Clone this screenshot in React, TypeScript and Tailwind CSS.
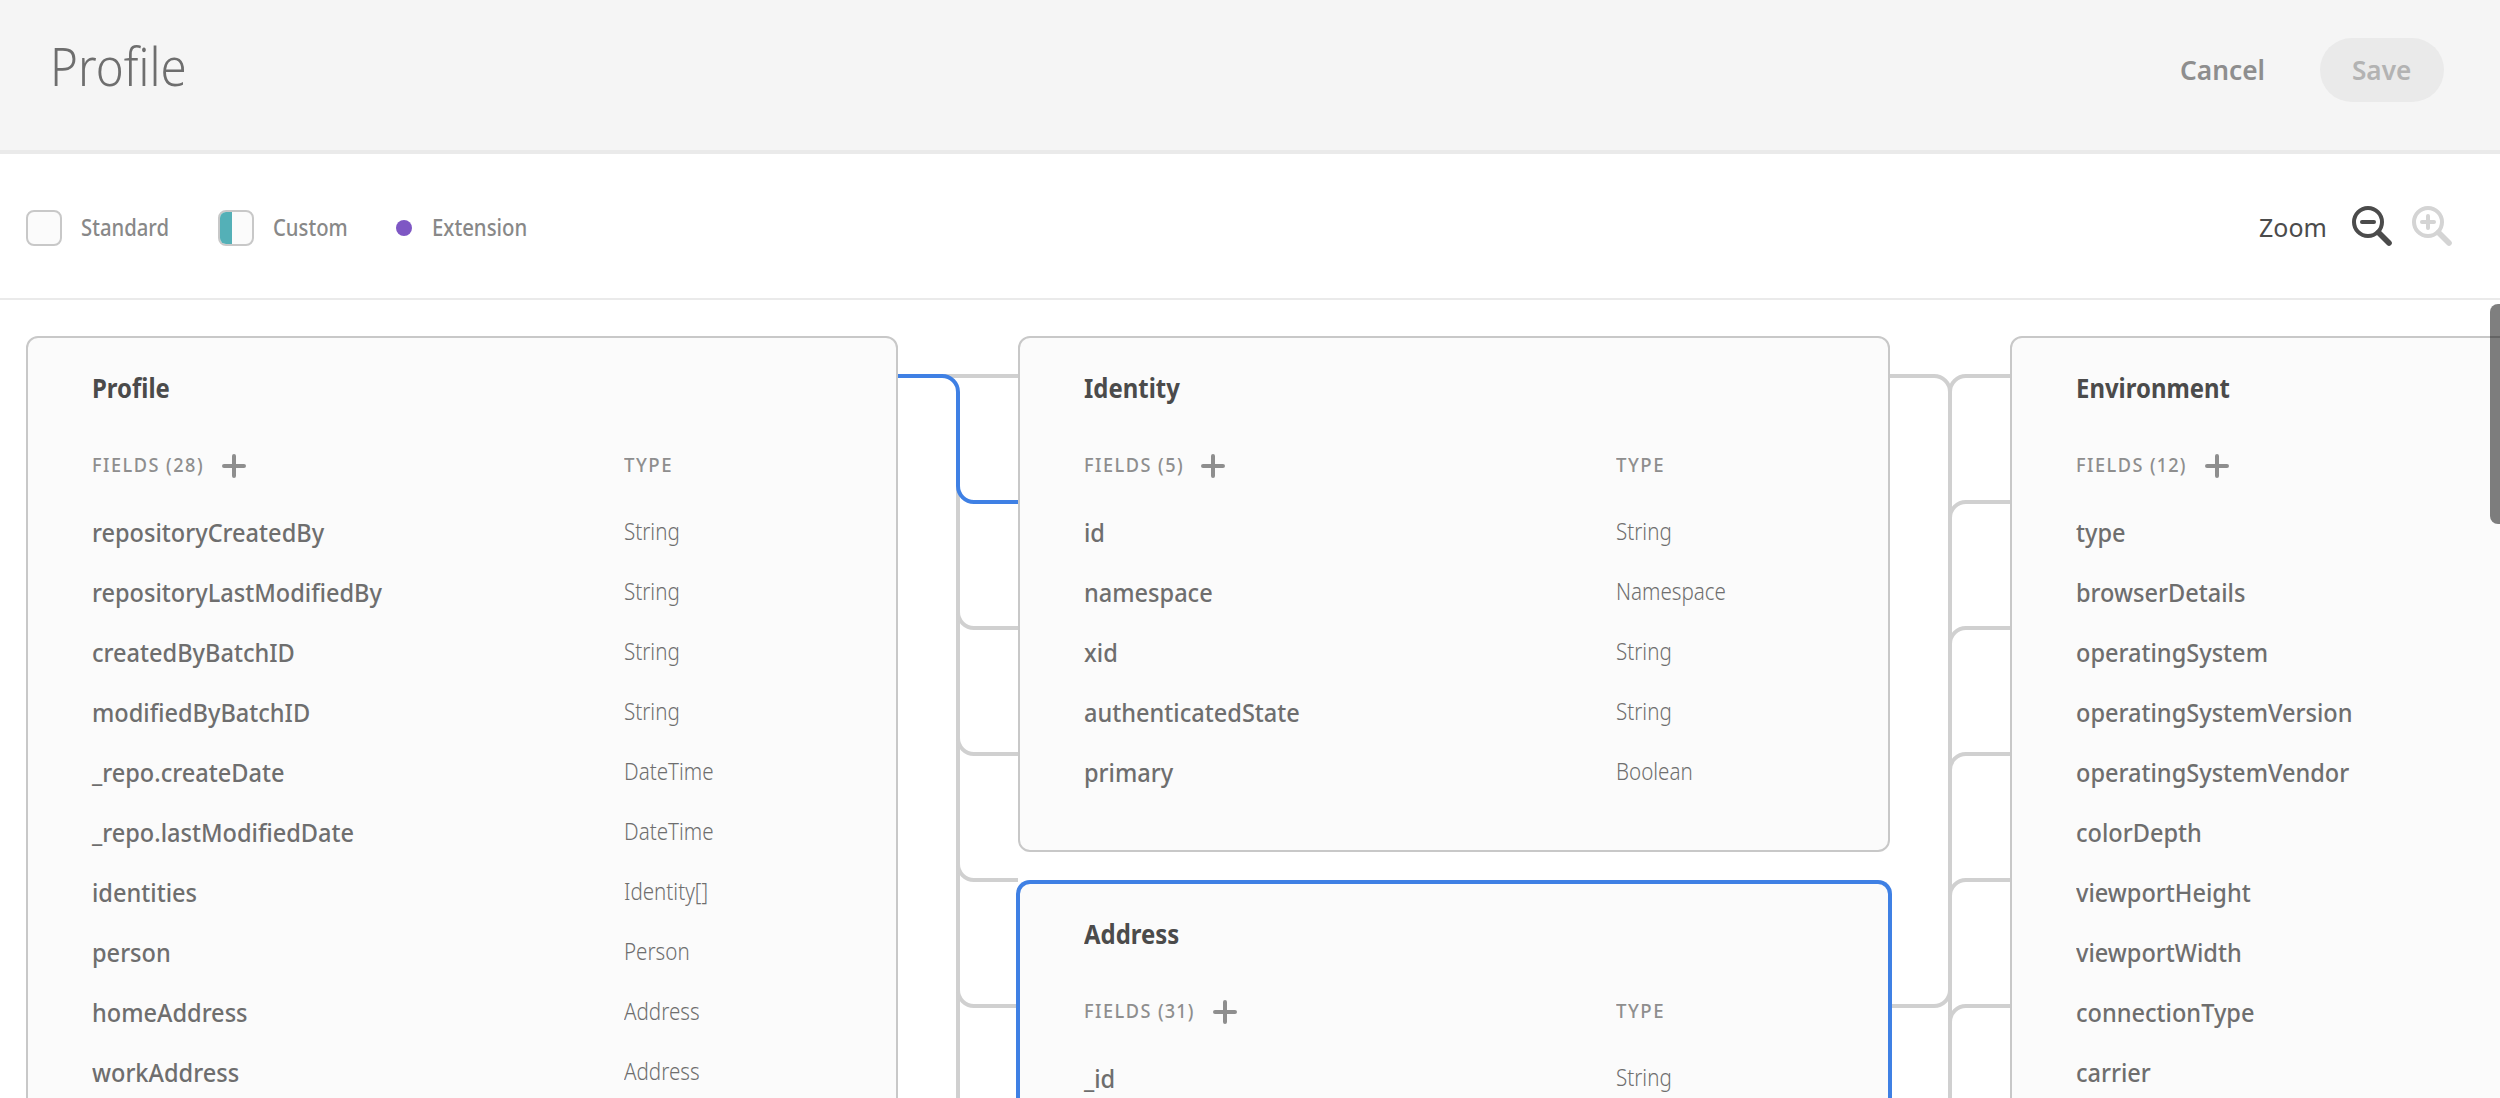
import type { ReactNode } from "react";

type Field = [name: string, type: string];

const profileFields: Field[] = [
  ["repositoryCreatedBy", "String"],
  ["repositoryLastModifiedBy", "String"],
  ["createdByBatchID", "String"],
  ["modifiedByBatchID", "String"],
  ["_repo.createDate", "DateTime"],
  ["_repo.lastModifiedDate", "DateTime"],
  ["identities", "Identity[]"],
  ["person", "Person"],
  ["homeAddress", "Address"],
  ["workAddress", "Address"],
];

const identityFields: Field[] = [
  ["id", "String"],
  ["namespace", "Namespace"],
  ["xid", "String"],
  ["authenticatedState", "String"],
  ["primary", "Boolean"],
];

const addressFields: Field[] = [["_id", "String"]];

const environmentFields: Field[] = [
  ["type", "String"],
  ["browserDetails", "BrowserDetails"],
  ["operatingSystem", "String"],
  ["operatingSystemVersion", "String"],
  ["operatingSystemVendor", "String"],
  ["colorDepth", "Integer"],
  ["viewportHeight", "Integer"],
  ["viewportWidth", "Integer"],
  ["connectionType", "String"],
  ["carrier", "String"],
];

function ZoomIcon({ plus = false, className }: { plus?: boolean; className: string }) {
  return (
    <svg viewBox="0 0 40 40" className={`size-10 ${className}`} fill="none" stroke="currentColor" strokeLinecap="round">
      <circle cx="16" cy="16" r="14" strokeWidth="4" />
      <path d="M26.5 26.5 37 37" strokeWidth="5.6" />
      <path d="M10 16h12" strokeWidth="4" />
      {plus && <path d="M16 10v12" strokeWidth="4" />}
    </svg>
  );
}

function SchemaCard({
  title,
  count,
  fields,
  selected = false,
  hideTypes = false,
  fill = false,
}: {
  title: string;
  count: number;
  fields: Field[];
  selected?: boolean;
  hideTypes?: boolean;
  fill?: boolean;
}) {
  // A "1" sits in a wide figure box, so counts holding one are set tighter.
  const countTracking = String(count).includes("1") ? "tracking-[1.2px]" : "tracking-[1.6px]";
  return (
    <section
      className={`w-[872px] shrink-0 border-2 bg-[#fbfbfb] px-16 pt-[30px] pb-12 ${
        selected ? "border-[#3f80e4] ring-2 ring-[#3f80e4]" : "border-[#c8c8c8]"
      } ${fill ? "h-[900px] rounded-t-xl" : "rounded-xl"}`}
    >
      <h2 className="origin-left scale-x-[0.92] text-[26px] leading-10 font-bold text-[#4b4b4b]">{title}</h2>
      <div className="mt-9 flex h-10 text-[19.6px] leading-[42px] font-medium text-[#8e8e8e]">
        <div className="flex w-[532px] items-center">
          <span className="mt-0.5 -mr-[10px] origin-left scale-x-[0.925] tracking-[1.6px] whitespace-nowrap">
            FIELDS <span className={countTracking}>({count})</span>
          </span>
          <svg viewBox="0 0 24 24" className="mt-1 ml-[19px] size-6" stroke="currentColor" strokeWidth="4" strokeLinecap="round">
            <path d="M12 2v20M2 12h20" />
          </svg>
        </div>
        {!hideTypes && <span className="origin-left scale-x-[0.95] tracking-[1.6px]">TYPE</span>}
      </div>
      <ul className="mt-[18px]">
        {fields.map(([name, type]) => (
          <li key={name} className="flex h-[60px] text-[#6e6e6e]">
            <span className="w-[532px] origin-left scale-x-[0.906] text-[26px] leading-[60px] font-medium">{name}</span>
            {!hideTypes && <span className="origin-left scale-x-[0.895] text-[23px] leading-[59px] font-light">{type}</span>}
          </li>
        ))}
      </ul>
    </section>
  );
}

function Gutter({ children }: { children: ReactNode }) {
  return (
    <svg viewBox="0 0 120 762" className="h-[762px] w-[120px] shrink-0" fill="none" stroke="#d0d0d0" strokeWidth="4">
      {children}
    </svg>
  );
}

function Swatch({ children }: { children?: ReactNode }) {
  return <span className="mt-1 flex size-9 overflow-hidden rounded-lg border-2 border-[#c8c8c8] bg-[#fbfbfb]">{children}</span>;
}

export default function App() {
  return (
    <div className="flex h-[1098px] w-[2500px] flex-col overflow-hidden bg-white font-['Noto_Sans',sans-serif]">
      <header className="flex h-[154px] shrink-0 items-start border-b-4 border-[#eaeaea] bg-[#f5f5f5] pr-14 pl-[50px]">
        <h1 className="mt-[34px] mr-auto origin-left scale-x-[0.895] text-[53px] leading-[64px] font-light text-[#6e6e6e]">
          Profile
        </h1>
        <button className="mt-[38px] w-[140px] text-left text-[27px] leading-[64px] font-semibold text-[#8e8e8e]">
          <span className="inline-block origin-left scale-x-[0.975]">Cancel</span>
        </button>
        <button className="mt-[38px] h-16 w-[124px] rounded-full bg-[#eaeaea] text-[27px] leading-[64px] font-semibold text-[#b3b3b3]">
          <span className="inline-block scale-x-[0.97]">Save</span>
        </button>
      </header>

      <div className="flex h-[146px] shrink-0 items-center border-b-2 border-[#eaeaea] pr-12 pl-[26px] text-[23px] font-medium text-[#888]">
        <Swatch />
        <span className="mt-[3px] ml-[19px] w-[137px] origin-left scale-x-[0.88]">Standard</span>
        <Swatch>
          <span className="w-3 bg-[#54b0b7]" />
        </Swatch>
        <span className="mt-[3px] ml-[19px] w-[123px] origin-left scale-x-[0.88]">Custom</span>
        <span className="mt-1 size-4 rounded-full bg-[#7e57c4]" />
        <span className="mt-[3px] mr-auto ml-5 origin-left scale-x-[0.885]">Extension</span>
        <span className="mt-0.5 w-[93px] origin-left scale-x-[0.96] text-[26px] font-normal text-[#4b4b4b]">Zoom</span>
        <ZoomIcon className="mr-5 text-[#4b4b4b]" />
        <ZoomIcon plus className="text-[#d4d4d4]" />
      </div>

      <main className="relative flex grow items-start overflow-hidden pt-9 pl-[26px]">
        <SchemaCard title="Profile" count={28} fields={profileFields} fill />
        <Gutter>
          <path d="M44 40h76M60 60V762" />
          <path d="M60 276a16 16 0 0 0 16 16h44M60 402a16 16 0 0 0 16 16h44M60 528a16 16 0 0 0 16 16h44M60 654a16 16 0 0 0 16 16h44" />
          <path d="M0 40h44a16 16 0 0 1 16 16v94a16 16 0 0 0 16 16h44" stroke="#3f80e4" />
        </Gutter>
        <div className="flex flex-col gap-[30px]">
          <SchemaCard title="Identity" count={5} fields={identityFields} />
          <SchemaCard title="Address" count={31} fields={addressFields} selected fill />
        </div>
        <Gutter>
          <path d="M0 40h44a16 16 0 0 1 16 16V762" />
          <path d="M2 670h42a16 16 0 0 0 16-16" />
          <path d="M60 56a16 16 0 0 1 16-16h44M60 182a16 16 0 0 1 16-16h44M60 308a16 16 0 0 1 16-16h44M60 434a16 16 0 0 1 16-16h44M60 560a16 16 0 0 1 16-16h44M60 686a16 16 0 0 1 16-16h44" />
        </Gutter>
        <SchemaCard title="Environment" count={12} fields={environmentFields} hideTypes fill />
        <div className="absolute top-1 right-0 h-[220px] w-2.5 rounded-l-lg bg-black/50" />
      </main>
    </div>
  );
}
